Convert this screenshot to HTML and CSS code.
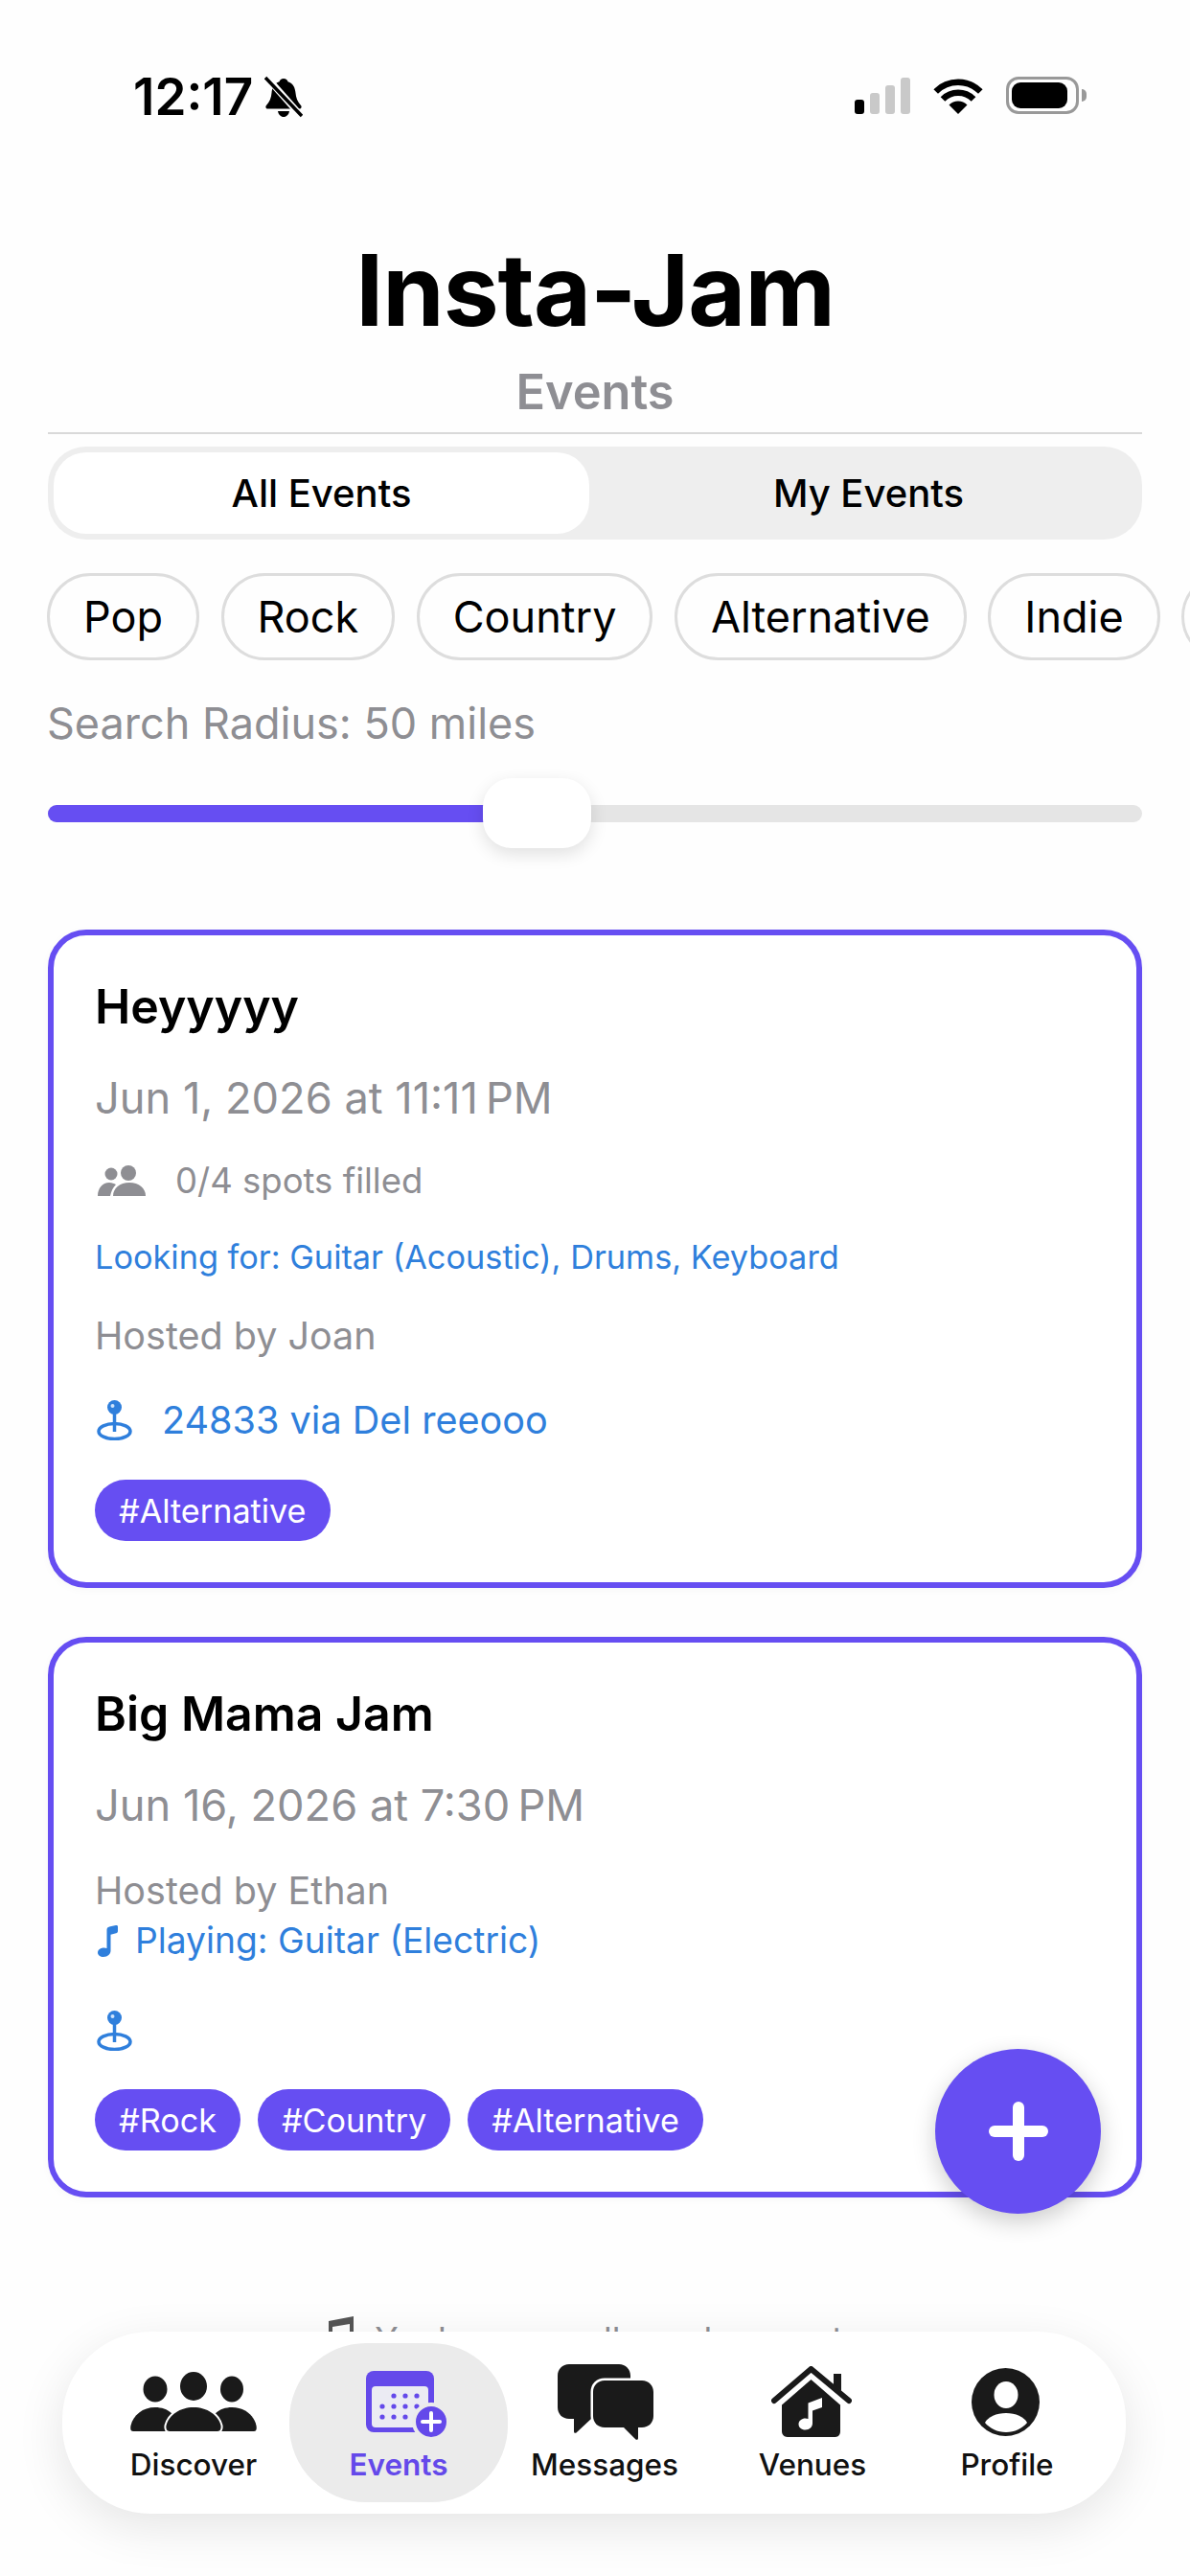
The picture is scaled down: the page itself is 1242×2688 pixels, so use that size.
FILE: index.html
```html
<!DOCTYPE html>
<html lang="en">
<head>
<meta charset="utf-8">
<title>Insta-Jam</title>
<link rel="stylesheet" href="styles.css">
</head>
<body>
<div class="screen">
  <div class="status">
    <div class="status-left">
      <span class="time">12:17</span>
      <svg class="bell" viewBox="0 0 40 44"><path d="M20 3c2.500 0 4 1.500 4.500 3.200C30 8 32 12.500 32.500 18c.4 5 2 9 5.500 13 1.300 1.500.5 3.500-1.500 3.500H3.500C1.500 34.500.7 32.500 2 31c3.500-4 5.100-8 5.500-13C8 12.500 10 8 15.500 6.200 16 4.500 17.500 3 20 3z"/><path d="M14 37h12c-.6 3.500-3 6-6 6s-5.400-2.500-6-6z"/><path class="bell-gap" d="M0 -1L40 44"/><path class="bell-line" d="M1 2L39 42"/></svg>
    </div>
    <div class="status-right">
      <div class="signal"><i class="bar b1"></i><i class="bar b2"></i><i class="bar b3"></i><i class="bar b4"></i></div>
      <svg class="wifi" viewBox="0 0 52 38"><path d="M26 38L16.500 28.500A13.500 13.500 0 0 1 35.500 28.500Z"/><path class="arc" d="M10 22.500A22.500 22.500 0 0 1 42 22.500"/><path class="arc" d="M2.700 14.500A33 33 0 0 1 49.300 14.500"/></svg>
      <div class="battery"><div class="battery-level"></div></div>
    </div>
  </div>

  <header class="header">
    <h1 class="title">Insta-Jam</h1>
    <div class="subtitle">Events</div>
  </header>

  <main class="content">
    <div class="toggle">
      <div class="toggle-btn active">All Events</div>
      <div class="toggle-btn">My Events</div>
    </div>

    <div class="chips">
      <span class="chip">Pop</span>
      <span class="chip">Rock</span>
      <span class="chip">Country</span>
      <span class="chip">Alternative</span>
      <span class="chip">Indie</span>
      <span class="chip chip-more"></span>
    </div>

    <div class="radius-label">Search Radius: 50 miles</div>
    <div class="slider">
      <div class="track"><div class="fill"></div></div>
      <div class="thumb"></div>
    </div>

    <article class="card">
      <h2 class="card-title">Heyyyyy</h2>
      <div class="card-date">Jun 1, 2026 at 11:11&#8239;PM</div>
      <div class="spots">
        <svg class="people" viewBox="0 0 50 32"><circle cx="14" cy="9" r="6.500"/><circle cx="32" cy="8" r="8"/><path d="M0 32c0-8 5-14 12-14 3 0 5 1 7 2-3 3-5 7-6 12z"/><path d="M16 32c0-8 7-14 17-14s17 6 17 14z"/></svg>
        <span>0/4 spots filled</span>
      </div>
      <div class="looking">Looking for: Guitar (Acoustic), Drums, Keyboard</div>
      <div class="host">Hosted by Joan</div>
      <div class="location">
        <svg class="pin" viewBox="0 0 37 42"><path class="pin-line" d="M18.500 13V33"/><ellipse class="pin-line" cx="18.500" cy="32.500" rx="16.500" ry="8"/><circle class="pin-head" cx="18.500" cy="7.500" r="7.500"/><circle class="pin-spot" cx="16.500" cy="6" r="2"/></svg>
        <span>24833 via Del reeooo</span>
      </div>
      <div class="tags"><span class="tag">#Alternative</span></div>
    </article>

    <article class="card">
      <h2 class="card-title">Big Mama Jam</h2>
      <div class="card-date">Jun 16, 2026 at 7:30&#8239;PM</div>
      <div class="host host-tight">Hosted by Ethan</div>
      <div class="playing">
        <svg class="note" viewBox="0 0 21 33"><path d="M9.500 4.500C9.500 2.500 11 1.800 13 1.300L19 0c1.300-.2 2 .4 2 1.500V6c0 1.300-.6 1.900-1.800 2.200L13.500 9.700V26.500C13.500 30 10.500 33 6 33 2.500 33 0 31 0 28.500 0 25.500 3 23.500 6.500 23.500c1.200 0 2.200.2 3 .6z"/></svg>
        <span>Playing: Guitar (Electric)</span>
      </div>
      <div class="location location-empty">
        <svg class="pin" viewBox="0 0 37 42"><path class="pin-line" d="M18.500 13V33"/><ellipse class="pin-line" cx="18.500" cy="32.500" rx="16.500" ry="8"/><circle class="pin-head" cx="18.500" cy="7.500" r="7.500"/><circle class="pin-spot" cx="16.500" cy="6" r="2"/></svg>
      </div>
      <div class="tags"><span class="tag">#Rock</span><span class="tag">#Country</span><span class="tag">#Alternative</span></div>
    </article>

    <div class="end-note">
      <svg class="end-icon" viewBox="0 0 26 36"><path d="M0 5L26 0V36H22V8L4 11V36H0Z"/></svg>
      <span>You've seen all nearby events</span>
    </div>
  </main>

  <button class="fab" aria-label="Add event"><span class="plus"></span></button>

  <nav class="nav">
    <div class="nav-item">
      <svg class="ic ic-discover" viewBox="0 0 132 62"><ellipse cx="26" cy="18" rx="12.500" ry="13.500"/><ellipse cx="106" cy="18" rx="12" ry="13.500"/><ellipse cx="66" cy="15" rx="14" ry="15"/><path d="M3 62C0 62 0 59 .500 56 3 45 13 37 26 37s24 8 26 25z"/><path d="M129 62c3 0 3-3 2.500-6C129 45 119 37 106 37s-24 8-26 25z"/><path class="ring" d="M41 62c-3 0-4-3-3.500-6C40 45 52 37 66 37s26 8 28.500 19c.5 3-.5 6-3.500 6z"/></svg>
      <span class="nav-label">Discover</span>
    </div>
    <div class="nav-item active">
      <svg class="ic ic-events" viewBox="0 0 86 71"><rect class="cal" width="71" height="64" rx="8"/><rect class="cal-in" x="6" y="16" width="59" height="43" rx="4"/><g class="dots"><circle cx="29" cy="26" r="2.600"/><circle cx="41" cy="26" r="2.600"/><circle cx="53" cy="26" r="2.600"/><circle cx="17" cy="37" r="2.600"/><circle cx="29" cy="37" r="2.600"/><circle cx="41" cy="37" r="2.600"/><circle cx="53" cy="37" r="2.600"/><circle cx="17" cy="48" r="2.600"/><circle cx="29" cy="48" r="2.600"/><circle cx="41" cy="48" r="2.600"/></g><circle class="plus-bg" cx="68" cy="53" r="18"/><path class="plus-mark" d="M68 44V62M59 53H77"/></svg>
      <span class="nav-label">Events</span>
    </div>
    <div class="nav-item">
      <svg class="ic ic-messages" viewBox="0 0 100 79"><path d="M12 0H64C71 0 76 5 76 12V45C76 52 71 57 64 57H35L20 71C18.500 72.500 17 72 17 70V57H12C5 57 0 52 0 45V12C0 5 5 0 12 0Z"/><path class="ring-msg" d="M49 17H88C95 17 100 22 100 29V54C100 61 95 66 88 66H84V77C84 79 82.500 79.500 81 78L69 66H49C42 66 37 61 37 54V29C37 22 42 17 49 17Z"/></svg>
      <span class="nav-label">Messages</span>
    </div>
    <div class="nav-item">
      <svg class="ic ic-venues" viewBox="0 0 84 74"><path class="chimney" d="M65 8H73V26L65 20Z"/><path class="roof" d="M3 36L41.500 3L81 36"/><path d="M41.500 14L72 40.500V68C72 71.500 70 74 66.500 74H17C13.500 74 11 71.500 11 68V40.500Z"/><path class="venue-note" d="M38.500 38.500L53 33V43L43 46.500V59.500C43 63.500 40 66.500 35.500 66.500 31.500 66.500 28.500 64 28.500 60.500 28.500 57 32 54.500 35.500 54.500 36.500 54.500 37.500 54.700 38.500 55Z"/></svg>
      <span class="nav-label">Venues</span>
    </div>
    <div class="nav-item">
      <svg class="ic ic-profile" viewBox="0 0 71 71"><circle cx="35.500" cy="35.500" r="35.500"/><ellipse class="white" cx="36" cy="28" rx="12.500" ry="14"/><path class="white" d="M14 57C17 51 26 47 36 47S55 51 58 57C53 63 45 67 36 67S19 63 14 57Z"/></svg>
      <span class="nav-label">Profile</span>
    </div>
  </nav>
</div>
</body>
</html>
```
FILE: styles.css
```css
* { box-sizing: border-box; }
html, body { margin: 0; padding: 0; }
body { background: #fefefe; font-family: Inter, "Noto Sans", sans-serif; color: #000; }
.screen { position: relative; width: 1242px; height: 2688px; overflow: hidden; background: #fefefe; }

.status { height: 243px; padding: 79px 116px 0 139px; display: flex; justify-content: space-between; align-items: flex-start; }
.status-left { display: flex; align-items: flex-start; gap: 12px; }
.time { font-size: 53px; line-height: 44px; font-weight: 600; color: #000; }
.bell { width: 40px; height: 44px; }
.bell-gap { stroke: #fefefe; stroke-width: 7px; fill: none; }
.bell-line { stroke: #000; stroke-width: 3.500px; fill: none; }
.status-right { display: flex; align-items: flex-start; padding-top: 1px; }
.signal { display: flex; align-items: flex-end; gap: 6px; height: 38px; margin-top: 1px; width: 60px; }
.bar { display: block; width: 10px; border-radius: 3px; background: #c9c9c9; }
.b1 { height: 15px; background: #000; }
.b2 { height: 22px; }
.b3 { height: 30px; }
.b4 { height: 38px; }
.wifi { width: 52px; height: 38px; margin: 1px 0 0 22px; fill: #000; }
.wifi .arc { fill: none; stroke: #000; stroke-width: 6.500px; }
.battery { position: relative; width: 76px; height: 39px; margin-left: 24px; border: 3px solid #999; border-radius: 13px; padding: 3px; }
.battery::after { content: ""; position: absolute; right: -11px; top: 10px; width: 5px; height: 13px; background: #999; border-radius: 0 6px 6px 0; }
.battery-level { width: 58px; height: 27px; background: #000; border-radius: 9px; }

.header { margin: 0 50px; text-align: center; border-bottom: 2px solid #d9d9d9; padding-bottom: 12px; }
.title { margin: 0 0 16px; font-size: 103.500px; line-height: 120px; font-weight: 700; letter-spacing: -1px; color: #000; }
.subtitle { font-size: 50.500px; line-height: 60px; font-weight: 600; color: #8e8e93; }

.content { padding: 0 50px; }
.toggle { margin-top: 13px; height: 97px; background: #eeeeee; border-radius: 40px; padding: 6px; display: flex; }
.toggle-btn { display: flex; align-items: center; justify-content: center; font-size: 40px; font-weight: 500; color: #000; border-radius: 34px; }
.toggle-btn:first-child { width: 559px; }
.toggle-btn:last-child { flex: 1; padding-left: 12px; }
.toggle-btn.active { background: #fff; }

.chips { margin: 35px -50px 0 -1px; display: flex; gap: 22.500px; overflow: hidden; }
.chip { flex: none; height: 91px; padding: 0 35px; display: flex; align-items: center; border: 3px solid #dddddd; border-radius: 46px; font-size: 45px; color: #000; background: #fefefe; }
.chip-more { width: 120px; }

.radius-label { margin-top: 39px; margin-left: -1px; font-size: 45px; line-height: 54px; color: #8e8e93; }
.slider { position: relative; margin-top: 30px; height: 73px; display: flex; align-items: center; }
.track { width: 100%; height: 18px; border-radius: 9px; background: #e5e5e5; overflow: hidden; }
.fill { width: 460px; height: 100%; background: #664ef2; }
.thumb { position: absolute; left: 454px; top: 0; width: 113px; height: 73px; border-radius: 30px; background: #fff; box-shadow: 0 6px 18px rgba(0, 0, 0, .12); }

.card { margin-top: 85px; padding: 42px 43px 43px; border: 6px solid #664ef2; border-radius: 40px; background: #fff; box-shadow: 0 2px 10px rgba(0, 0, 0, .03); }
.card + .card { margin-top: 51px; }
.card-title { margin: 0; font-size: 50px; line-height: 64px; font-weight: 600; color: #000; }
.card-date { margin-top: 36px; font-size: 45.200px; line-height: 56px; color: #8e8e93; }
.spots { margin-top: 36px; display: flex; align-items: center; gap: 31px; font-size: 36.500px; line-height: 44px; color: #8e8e93; }
.people { width: 50px; height: 32px; margin-left: 3px; fill: #8e8e93; }
.looking { margin-top: 36px; font-size: 34.300px; line-height: 44px; color: #2f7fdc; }
.host { margin-top: 37px; font-size: 39.500px; line-height: 46px; color: #8e8e93; }
.host-tight { margin-top: 38px; }
.playing { margin-top: 6px; display: flex; align-items: center; gap: 18px; font-size: 37.200px; line-height: 46px; color: #2f7fdc; }
.note { width: 21px; height: 33px; margin-left: 3px; fill: #2f7fdc; }
.location { margin-top: 40px; height: 50px; display: flex; align-items: center; gap: 31px; font-size: 39.600px; line-height: 50px; color: #2f7fdc; }
.location-empty { margin-top: 46px; height: 49px; }
.pin { width: 37px; height: 42px; margin-left: 2px; }
.pin-line { fill: none; stroke: #2f7fdc; stroke-width: 3.500px; }
.pin-head { fill: #2f7fdc; }
.pin-spot { fill: #cfe3fb; }
.tags { margin-top: 37px; display: flex; gap: 18px; }
.tag { height: 64px; padding: 0 25px; display: flex; align-items: center; border-radius: 32px; background: #664ef2; color: #fff; font-size: 34.200px; }

.end-note { margin-top: 124px; display: flex; justify-content: center; align-items: flex-start; gap: 22px; font-size: 36px; line-height: 48px; color: #8e8e93; }
.end-icon { width: 26px; height: 36px; fill: #555; flex: none; }

.fab { position: absolute; left: 976px; top: 2138px; width: 173px; height: 172px; border: 0; border-radius: 50%; background: #664ef2; box-shadow: 0 8px 24px rgba(0, 0, 0, .2); display: flex; align-items: center; justify-content: center; padding: 0; }
.plus { position: relative; display: block; width: 62px; height: 12px; border-radius: 6px; background: #fff; }
.plus::after { content: ""; position: absolute; left: 25px; top: -25px; width: 12px; height: 62px; border-radius: 6px; background: #fff; }

.nav { position: absolute; left: 65px; top: 2433px; width: 1110px; height: 190px; padding: 12px 0 12px 37px; border-radius: 92px; background: #fff; box-shadow: 0 14px 50px rgba(0, 0, 0, .10); display: grid; grid-template-columns: 200px 228px 202px 232px 174px; }
.nav-item { display: flex; flex-direction: column; align-items: center; height: 166px; border-radius: 80px; position: relative; }
.nav-item.active { background: #ebebeb; }
.ic { position: absolute; fill: #1a1a1a; }
.ic-discover { width: 132px; height: 62px; top: 30px; left: 34px; }
.ic-events { width: 86px; height: 71px; top: 29px; left: 80px; }
.ic-messages { width: 100px; height: 79px; top: 22px; left: 52px; }
.ic-venues { width: 84px; height: 74px; top: 24px; left: 73px; }
.ic-profile { width: 71px; height: 71px; top: 26px; left: 50px; }
.nav-label { margin-top: 107px; font-size: 31.500px; line-height: 40px; font-weight: 500; color: #111; white-space: nowrap; }
.active .nav-label { color: #6449ea; font-weight: 600; }
.ring { stroke: #fff; stroke-width: 4px; paint-order: stroke; }
.ring-msg { stroke: #fff; stroke-width: 5px; paint-order: stroke; }
.cal { fill: #6449ea; }
.cal-in { fill: #ebebf3; }
.dots { fill: #6449ea; }
.plus-bg { fill: #6449ea; stroke: #ebebeb; stroke-width: 4px; }
.plus-mark { fill: none; stroke: #fff; stroke-width: 4px; stroke-linecap: round; }
.roof { fill: none; stroke: #1a1a1a; stroke-width: 6px; stroke-linecap: round; stroke-linejoin: round; }
.venue-note { fill: #fff; }
.white { fill: #fff; }
```
